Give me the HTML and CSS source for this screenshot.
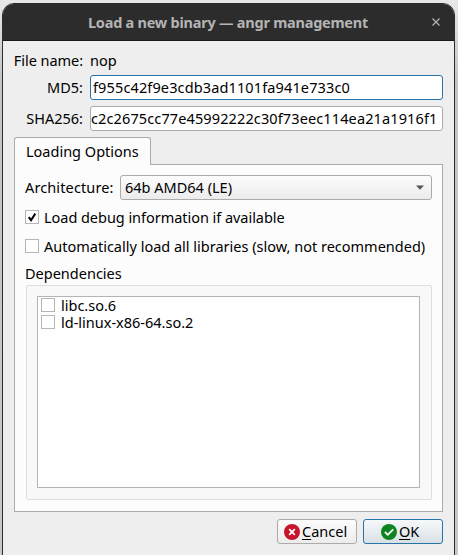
FILE: index.html
```
<!DOCTYPE html>
<html lang="en">
<head>
<meta charset="utf-8">
<title>Load a new binary</title>
<link rel="stylesheet" href="styles.css">
</head>
<body>
<div class="window">
  <header class="titlebar"><span class="t title">Load a new binary — angr management</span>
    <svg class="close" viewBox="0 0 8 8"><path d="M.5.5l7 7M7.5.5l-7 7"/></svg>
  </header>
  <main class="content">
    <div class="row name-row"><label><span class="t l-file">File name:</span></label><span class="t">nop</span></div>
    <div class="row"><label><span class="t">MD5:</span></label><div class="field focused"><span class="t md5">f955c42f9e3cdb3ad1101fa941e733c0</span></div></div>
    <div class="row"><label><span class="t">SHA256:</span></label><div class="field scrolled"><span class="t sha">c2c2675cc77e45992222c30f73eec114ea21a1916f1</span></div></div>
    <div class="tabs"><div class="tab"><span class="t">Loading Options</span></div></div>
    <section class="pane">
      <div class="arch"><span class="t l-arch">Architecture:</span><div class="combo"><span class="t">64b AMD64 (LE)</span><svg class="arrow" viewBox="0 0 8 5"><path d="M0 .5h8L4 4.7z"/></svg></div></div>
      <div class="option"><span class="check"><svg viewBox="0 0 12 12"><path d="M2.7 6.2L5 9.2 9.3 2.6"/></svg></span><span class="t l-debug">Load debug information if available</span></div>
      <div class="option second"><span class="check"></span><span class="t">Automatically load all libraries (slow, not recommended)</span></div>
      <div class="group-title"><span class="t">Dependencies</span></div>
      <div class="group"><div class="list">
        <div class="item"><span class="check"></span><span class="t">libc.so.6</span></div>
        <div class="item"><span class="check"></span><span class="t">ld-linux-x86-64.so.2</span></div>
      </div></div>
    </section>
    <footer class="buttons">
      <div class="button"><svg viewBox="0 0 16 16"><circle cx="8" cy="8" r="8" fill="#c7162b"/><path d="M5.2 5.2l5.6 5.6M10.8 5.2l-5.6 5.6"/></svg><span class="t"><u>C</u>ancel</span></div>
      <div class="button default"><svg viewBox="0 0 16 16"><circle cx="8" cy="8" r="8" fill="#0e8420"/><path d="M4 8l2.8 2.8 5.4-5.4"/></svg><span class="t"><u>O</u>K</span></div>
    </footer>
  </main>
</div>
</body>
</html>
```
FILE: styles.css
```
* { box-sizing: border-box; }
body { margin: 0; height: 555px; overflow: hidden; background: linear-gradient(#e8e8e8, #c4c4c4 80px, #c8c8c8); font: 14.5px/17px "Noto Sans", sans-serif; color: #000; }
.window { margin: 3px 3px 0 2px; height: 570px; border: 1px solid #2c2c2c; border-radius: 12px 12px 0 0; background: #eee; overflow: hidden; }
.t { white-space: pre; display: block; }
.titlebar { height: 37px; background: #2c2c2c; border-bottom: 1px solid #191919; display: flex; align-items: center; position: relative; padding-left: 85px; color: #b4b4b4; font-weight: 700; }
.title { letter-spacing: -.24px; }
.close { position: absolute; right: 14px; top: 14px; width: 8px; height: 8px; stroke: #b4b4b4; fill: none; stroke-width: 1.2; }
.content { padding: 10px 11px 0; }
.row { display: flex; height: 25px; margin-bottom: 6px; align-items: center; }
.row label { width: 69px; margin-right: 7px; display: flex; justify-content: flex-end; }
.name-row { height: 18px; }
.l-file { letter-spacing: -.05px; }
.field { flex: 1; height: 25px; background: #fff; border: 1px solid #ababab; border-radius: 3px; padding: 3px 2px; overflow: hidden; }
.focused { border-color: #2674a8; }
.scrolled { padding-left: 0; }
.md5 { letter-spacing: .13px; }
.sha { letter-spacing: .12px; }
.tabs { height: 28px; margin-bottom: -1px; position: relative; }
.tab { width: 137px; height: 28px; border: 1px solid #ababab; border-bottom: 0; border-radius: 3px 3px 0 0; background: #fcfcfc; padding: 5px 11px; }
.pane { height: 348px; border: 1px solid #ababab; background: #fcfcfc; padding: 10px 10px 11px; }
.arch { display: flex; align-items: center; height: 25px; justify-content: space-between; }
.l-arch { letter-spacing: .12px; }
.combo { width: 312px; height: 25px; border: 1px solid #ababab; border-radius: 3px; background: linear-gradient(#fcfcfc, #ececec); display: flex; justify-content: space-between; align-items: center; padding: 0 7px 0 4px; }
.arrow { width: 8px; height: 5px; fill: #555; }
.option { display: flex; gap: 5px; height: 17px; margin-top: 9px; }
.second { margin-top: 12px; }
.l-debug { letter-spacing: -.04px; }
.check { width: 14px; height: 14px; margin-top: 1px; border: 1px solid #b6b6b6; background: #fff; flex: none; }
.check svg { display: block; width: 12px; height: 12px; fill: none; stroke: #000; stroke-width: 2; }
.group-title { height: 17px; margin-top: 10px; }
.group { margin: 3px 0 0 1px; height: 215px; border: 1px solid #dedede; border-radius: 2px; background: #f8f8f8; padding: 10px 11px 11px 10px; }
.list { height: 192px; border: 1px solid #b4b4b4; background: #fff; padding: 0 3px; }
.item { display: flex; height: 17px; gap: 6px; }
.buttons { display: flex; justify-content: flex-end; gap: 6px; margin-top: 7px; }
.button { width: 80px; height: 25px; border: 1px solid #ababab; border-radius: 3px; background: linear-gradient(#fcfcfc, #ececec); display: flex; align-items: center; padding-left: 6px; gap: 2px; }
.default { border-color: #2674a8; background: linear-gradient(#f6f9fa, #d8e0e5); padding-left: 17px; }
.button svg { width: 16px; height: 16px; stroke: #fff; stroke-width: 1.8; fill: none; }
.button circle { stroke: none; }
.button u { text-underline-offset: 2px; text-decoration-skip-ink: none; }
```
